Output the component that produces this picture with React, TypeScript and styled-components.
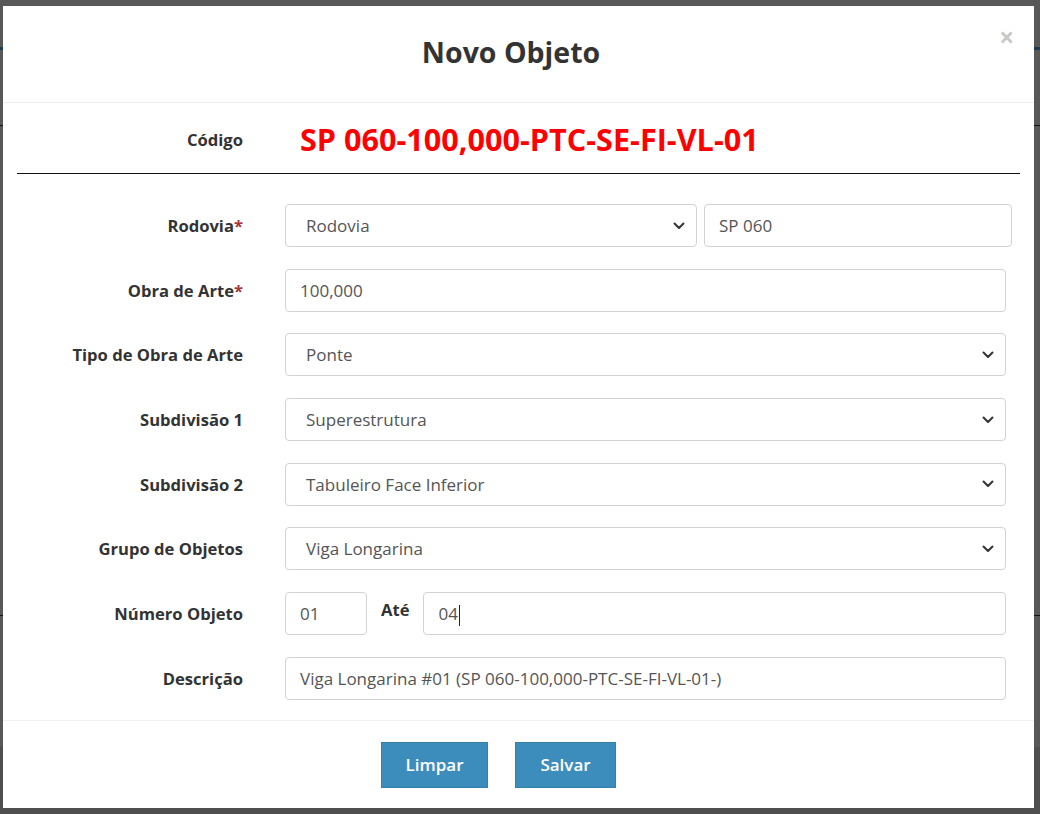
import * as React from 'react'
import styled, { createGlobalStyle } from 'styled-components'

const GlobalStyle = createGlobalStyle`
  html, body {
    margin: 0;
    padding: 0;
    background: #585858;
  }
  * {
    box-sizing: border-box;
  }
`

const FONT = `"Open Sans", "Lato", "Liberation Sans", sans-serif`

const Screen = styled.div`
  position: relative;
  width: 1040px;
  height: 814px;
  overflow: hidden;
  background: #585858;
  font-family: ${FONT};
`

const PageTop = styled.div`
  height: 47px;
`

const PageBar = styled.div`
  height: 3px;
  background: #1d3a4e;
`

const PageBlock = styled.div<{ $h: number }>`
  height: ${(p) => p.$h}px;
  border-bottom: 1px solid #111;
`

const PageTail = styled.div`
  height: 200px;
  border-top: 131px solid #585858;
  background: #4f4f4f;
`

const Modal = styled.div`
  position: absolute;
  top: 6px;
  left: 3px;
  width: 1031px;
  height: 802px;
  background: #fff;
  display: flex;
  flex-direction: column;
`

const Header = styled.div`
  position: relative;
  height: 97px;
  flex: 0 0 97px;
  border-bottom: 1px solid #ececec;
  display: flex;
  align-items: center;
  justify-content: center;
  padding-right: 15px;
`

const Title = styled.h4`
  margin: 0;
  font-size: 28.5px;
  font-weight: 700;
  color: #333;
  padding-bottom: 4px;
`

const Close = styled.span`
  position: absolute;
  top: 18px;
  right: 20px;
  font-size: 26px;
  font-weight: 700;
  color: #c8c8c8;
  line-height: 1;
`

const Body = styled.div`
  padding: 0 14px;
  flex: 1;
`

const CodeRow = styled.div`
  height: 71px;
  display: grid;
  grid-template-columns: 226px 1fr;
  column-gap: 57px;
  align-items: center;
  border-bottom: 1px solid #111;
  padding-top: 3px;
`

const Label = styled.label`
  text-align: right;
  font-size: 16.6px;
  font-weight: 700;
  color: #333;
  white-space: nowrap;
`

const Req = styled.span`
  color: #a33;
`

const Code = styled.div`
  font-size: 30.6px;
  font-weight: 700;
  color: #ff0000;
  line-height: 1.2;
`

const Form = styled.div`
  padding-top: 30px;
  display: flex;
  flex-direction: column;
  gap: 21.7px;
`

const Row = styled.div<{ $right?: number }>`
  display: grid;
  grid-template-columns: 226px 1fr;
  column-gap: 42px;
  align-items: center;
  padding-right: ${(p) => p.$right ?? 14}px;
`

const Controls = styled.div`
  display: flex;
  align-items: center;
  gap: 7px;
`

const Field = styled.div<{ $w?: number; $pad?: number }>`
  height: 43px;
  flex: ${(p) => (p.$w ? `0 0 ${p.$w}px` : '1')};
  border: 1px solid #d2d2d2;
  border-radius: 4px;
  padding: 0 11px 0 ${(p) => p.$pad ?? 14}px;
  display: flex;
  align-items: center;
  justify-content: space-between;
  font-size: 17px;
  color: #555;
  background: #fff;
  white-space: nowrap;
`

const Caret = styled.span`
  display: inline-block;
  width: 1px;
  height: 21px;
  background: #222;
  margin-left: 1px;
  vertical-align: middle;
`

const InlineLabel = styled.span`
  font-size: 16.6px;
  font-weight: 700;
  color: #333;
  margin: 0 7px;
  align-self: flex-start;
  padding-top: 6px;
`

const Chevron = () => (
  <svg width="12" height="8" viewBox="0 0 12 8" fill="none">
    <path d="M1.5 1.5 L6 6 L10.5 1.5" stroke="#333" strokeWidth="2" strokeLinecap="round" strokeLinejoin="round" />
  </svg>
)

const Footer = styled.div`
  flex: 0 0 88px;
  height: 88px;
  border-top: 1px solid #f0f0f0;
  display: flex;
  align-items: center;
  justify-content: center;
  gap: 27px;
  padding-right: 40px;
`

const Button = styled.button<{ $w: number }>`
  width: ${(p) => p.$w}px;
  height: 46px;
  background: #3c8dbc;
  border: 1px solid #367fa9;
  color: #fff;
  font-family: ${FONT};
  font-size: 17px;
  font-weight: 600;
  border-radius: 0;
`

const Select = ({ value, w }: { value: string; w?: number }) => (
  <Field $w={w} $pad={20}>
    <span>{value}</span>
    <Chevron />
  </Field>
)

export default function App() {
  return (
    <Screen>
      <GlobalStyle />
      <PageTop />
      <PageBar />
      <PageBlock $h={76} />
      <PageBlock $h={490} />
      <PageTail />

      <Modal>
        <Header>
          <Title>Novo Objeto</Title>
          <Close>×</Close>
        </Header>
        <Body>
          <CodeRow>
            <Label>Código</Label>
            <Code>SP 060-100,000-PTC-SE-FI-VL-01</Code>
          </CodeRow>
          <Form>
            <Row $right={8}>
              <Label>
                Rodovia<Req>*</Req>
              </Label>
              <Controls>
                <Select value="Rodovia" w={412} />
                <Field>SP 060</Field>
              </Controls>
            </Row>
            <Row>
              <Label>
                Obra de Arte<Req>*</Req>
              </Label>
              <Field>100,000</Field>
            </Row>
            <Row>
              <Label>Tipo de Obra de Arte</Label>
              <Select value="Ponte" />
            </Row>
            <Row>
              <Label>Subdivisão 1</Label>
              <Select value="Superestrutura" />
            </Row>
            <Row>
              <Label>Subdivisão 2</Label>
              <Select value="Tabuleiro Face Inferior" />
            </Row>
            <Row>
              <Label>Grupo de Objetos</Label>
              <Select value="Viga Longarina" />
            </Row>
            <Row>
              <Label>Número Objeto</Label>
              <Controls>
                <Field $w={82}>01</Field>
                <InlineLabel>Até</InlineLabel>
                <Field>
                  <span>
                    04
                    <Caret />
                  </span>
                </Field>
              </Controls>
            </Row>
            <Row>
              <Label>Descrição</Label>
              <Field>Viga Longarina #01 (SP 060-100,000-PTC-SE-FI-VL-01-)</Field>
            </Row>
          </Form>
        </Body>
        <Footer>
          <Button $w={107}>Limpar</Button>
          <Button $w={101}>Salvar</Button>
        </Footer>
      </Modal>
    </Screen>
  )
}
